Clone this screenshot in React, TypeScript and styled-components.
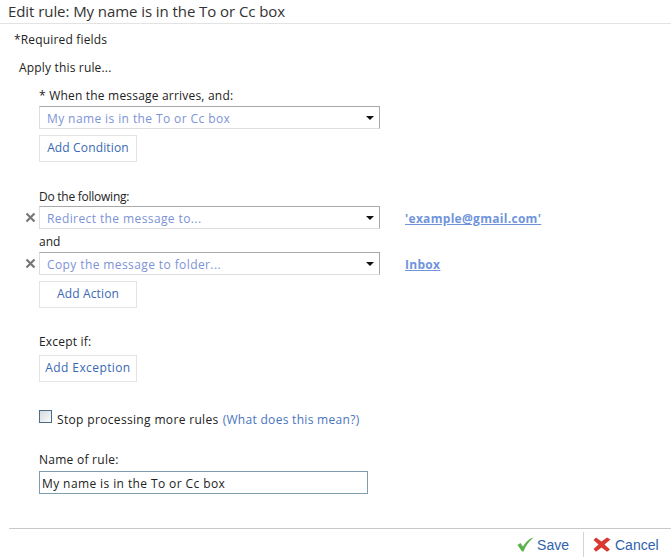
import React from "react";
import styled, { createGlobalStyle } from "styled-components";

const GlobalStyle = createGlobalStyle`
  html, body {
    margin: 0;
    padding: 0;
    background: #fff;
    overflow: hidden;
  }
`;

const Page = styled.div`
  width: 671px;
  height: 557px;
  overflow: hidden;
  font-family: "Open Sans", "Noto Sans", sans-serif;
  font-size: 12px;
  color: #222;
  display: flex;
  flex-direction: column;
`;

const Title = styled.div`
  height: 23px;
  padding-left: 8px;
  border-bottom: 1px solid #e3e3e3;
  font-size: 15px;
  line-height: 22px;
  letter-spacing: -0.07px;
  color: #333;
  white-space: nowrap;
`;

const Required = styled.div`
  margin: 8px 0 0 14px;
  height: 16px;
  line-height: 16px;
  letter-spacing: 0.17px;
`;

const ApplyLabel = styled.div`
  margin: 12px 0 0 19px;
  height: 16px;
  line-height: 16px;
  letter-spacing: 0.17px;
`;

const Body = styled.div`
  padding-left: 39px;
  display: flex;
  flex-direction: column;
  align-items: flex-start;
`;

const Label = styled.div<{ $top: number; $tracking: number }>`
  margin-top: ${p => p.$top}px;
  height: 16px;
  line-height: 16px;
  letter-spacing: ${p => p.$tracking}px;
  white-space: nowrap;
`;

const Row = styled.div<{ $top: number }>`
  position: relative;
  margin-top: ${p => p.$top}px;
  display: flex;
  align-items: center;
`;

const Select = styled.div`
  box-sizing: border-box;
  width: 341px;
  height: 23px;
  padding: 2px 8px 0 7px;
  border: 1px solid #dedede;
  border-top-color: #a9a9a9;
  border-right-color: #a9a9a9;
  display: flex;
  align-items: center;
  justify-content: space-between;
  color: #7d93d6;
  letter-spacing: 0.4px;
  white-space: nowrap;
`;

const Caret = styled.span`
  width: 0;
  height: 0;
  margin: -2px -3px 0 0;
  border-left: 4px solid transparent;
  border-right: 4px solid transparent;
  border-top: 4px solid #111;
`;

const Remove = styled.svg`
  position: absolute;
  left: -14px;
  top: 6px;
  width: 11px;
  height: 11px;
`;

const Target = styled.a`
  margin: 2px 0 0 25px;
  font-weight: 700;
  color: #6f94dc;
  text-decoration: underline;
  letter-spacing: 0.3px;
  white-space: nowrap;
`;

const ActionButton = styled.div<{ $top: number; $tracking: number }>`
  box-sizing: border-box;
  width: 98px;
  height: 27px;
  margin-top: ${p => p.$top}px;
  padding-bottom: 2px;
  border: 1px solid #e4e4e4;
  display: flex;
  align-items: center;
  justify-content: center;
  color: #3a68b4;
  letter-spacing: ${p => p.$tracking}px;
  white-space: nowrap;
`;

const StopRow = styled.div`
  margin-top: 29px;
  height: 16px;
  display: flex;
  align-items: center;
  gap: 5px;
  letter-spacing: 0.34px;
  white-space: nowrap;
`;

const Checkbox = styled.span`
  box-sizing: border-box;
  width: 13px;
  height: 13px;
  margin-top: -5px;
  border: 1px solid #4d6b85;
  background: linear-gradient(135deg, #d4dbe0, #fbfbfb);
`;

const HelpLink = styled.a`
  margin-left: -1px;
  color: #4a74bd;
  letter-spacing: 0.3px;
`;

const NameInput = styled.div`
  box-sizing: border-box;
  width: 329px;
  height: 23px;
  margin-top: 3px;
  padding-left: 2px;
  border: 1px solid #7f9db0;
  line-height: 23px;
  letter-spacing: 0.4px;
  white-space: nowrap;
`;

const Footer = styled.div`
  margin: 34px 0 0 9px;
  height: 28px;
  border-top: 1px solid #c8c8c8;
  display: flex;
  justify-content: flex-end;
  align-items: flex-end;
`;

const FooterButton = styled.div`
  box-sizing: border-box;
  height: 25px;
  display: flex;
  align-items: center;
  gap: 4px;
  color: #2f62ad;
  font-family: "Liberation Sans", Arial, sans-serif;
  font-size: 14px;
  white-space: nowrap;
`;

const SaveButton = styled(FooterButton)`
  width: 74px;
  padding-right: 14px;
  justify-content: flex-end;
  border-right: 1px solid #d4d4d4;
`;

const CancelButton = styled(FooterButton)`
  width: 87px;
  padding-left: 9px;
`;

const RuleRow: React.FC<{ text: string; target: string }> = ({ text, target }) => (
  <>
    <Remove viewBox="0 0 11 11">
      <path d="M1.5 1.5L9.5 9.5M9.5 1.5L1.5 9.5" stroke="#777" strokeWidth="2.2" />
    </Remove>
    <Select>
      {text}
      <Caret />
    </Select>
    <Target>{target}</Target>
  </>
);

export default function App() {
  return (
    <Page>
      <GlobalStyle />
      <Title>Edit rule: My name is in the To or Cc box</Title>
      <Required>*Required fields</Required>
      <ApplyLabel>Apply this rule...</ApplyLabel>
      <Body>
        <Label $top={12} $tracking={0.2}>* When the message arrives, and:</Label>
        <Row $top={2}>
          <Select>
            My name is in the To or Cc box
            <Caret />
          </Select>
        </Row>
        <ActionButton $top={6} $tracking={0.15}>Add Condition</ActionButton>
        <Label $top={27} $tracking={-0.25}>Do the following:</Label>
        <Row $top={1}>
          <RuleRow text="Redirect the message to..." target="'example@gmail.com'" />
        </Row>
        <Label $top={5} $tracking={0}>and</Label>
        <Row $top={2}>
          <RuleRow text="Copy the message to folder..." target="Inbox" />
        </Row>
        <ActionButton $top={6} $tracking={0.15}>Add Action</ActionButton>
        <Label $top={26} $tracking={0.2}>Except if:</Label>
        <ActionButton $top={5} $tracking={0.4}>Add Exception</ActionButton>
        <StopRow>
          <Checkbox />
          <span>Stop processing more rules</span>
          <HelpLink>(What does this mean?)</HelpLink>
        </StopRow>
        <Label $top={25} $tracking={0.26}>Name of rule:</Label>
        <NameInput>My name is in the To or Cc box</NameInput>
      </Body>
      <Footer>
        <SaveButton>
          <svg width="16" height="15" viewBox="0 0 16 15">
            <path d="M0.5 8L3.5 6L6 9.5C8 6 11 2.5 15.5 0.5L15.5 1.5C11.5 5 8.5 9 6.5 14.5L5 14.5Z" fill="#5cb24a" />
          </svg>
          Save
        </SaveButton>
        <CancelButton>
          <svg width="18" height="15" viewBox="0 0 18 15">
            <path d="M3 0.5L8.5 4.5L14 0.5L17.5 2.5L11.5 7.5L17 12.5L14 14.8L8.5 10.5L3 14.8L0.5 12L5.5 7.5L0.5 3Z" fill="#d83a32" />
          </svg>
          Cancel
        </CancelButton>
      </Footer>
    </Page>
  );
}
